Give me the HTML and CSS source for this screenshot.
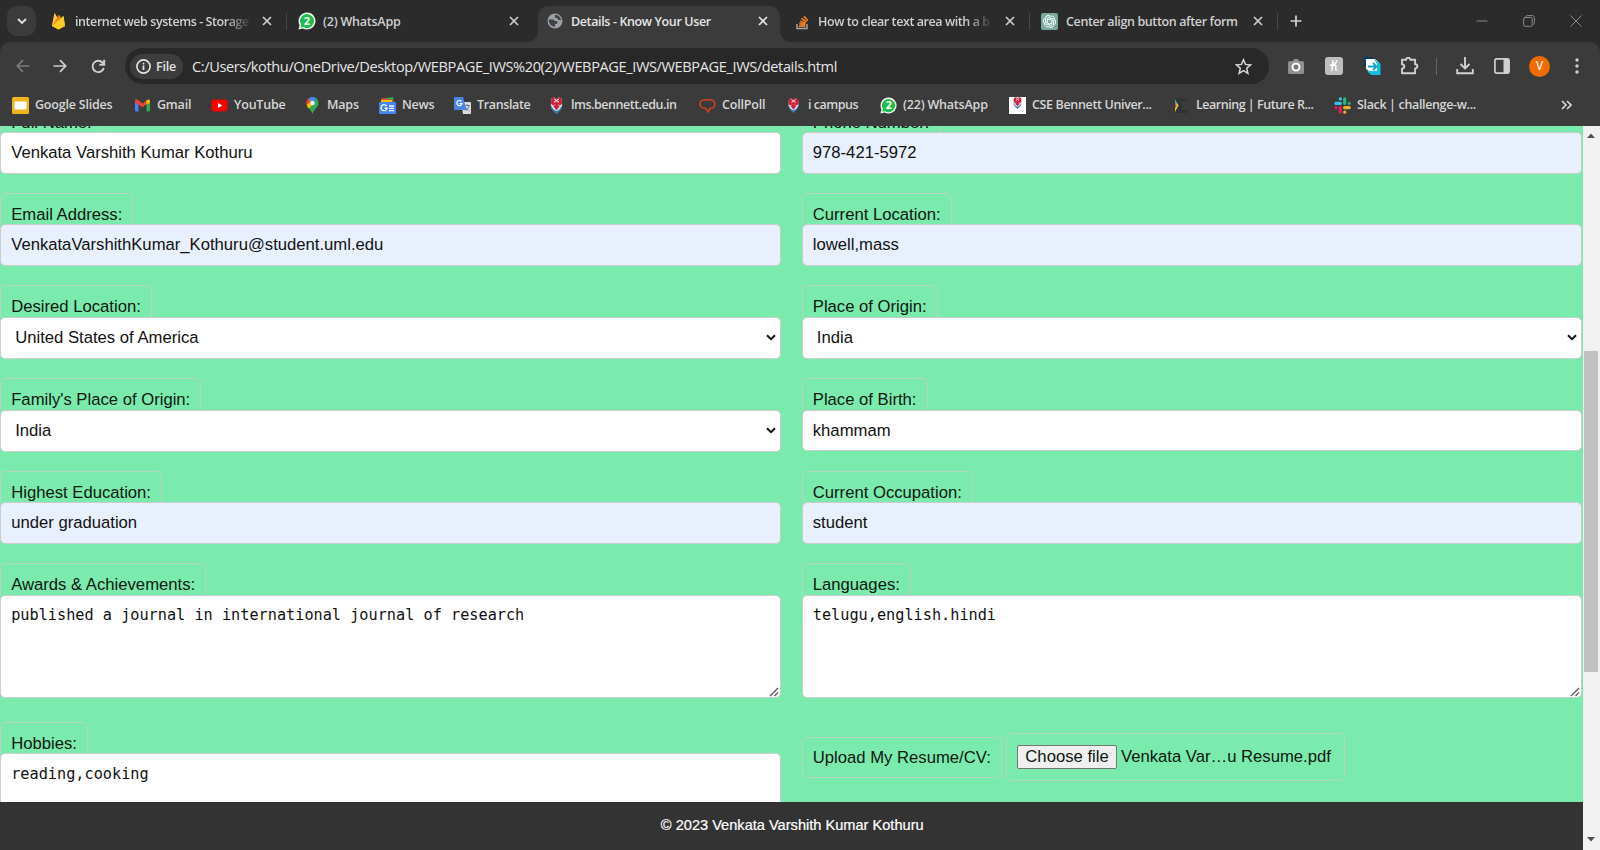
FILE: index.html
```html
<!DOCTYPE html>
<html lang="en">
<head>
<meta charset="utf-8">
<title>Details - Know Your User</title>
<link rel="stylesheet" href="styles.css">
</head>
<body>
<svg class="defs" width="0" height="0">
  <symbol id="x" viewBox="0 0 10 10"><path d="M1 1l8 8M9 1l-8 8" stroke="currentColor" stroke-width="1.7" fill="none"/></symbol>
  <symbol id="wa" viewBox="0 0 18 18"><path d="M9 .5a8.500 8.500 0 1 1-4 16L.4 17.600l1.200-4.400A8.500 8.500 0 0 1 9 .5z" fill="#f2fff5"/><path d="M9 2a7 7 0 1 1-3.600 13L2.400 15.700l.8-3A7 7 0 0 1 9 2z" fill="#1fbd4b"/></symbol>
  <symbol id="shield" viewBox="0 0 14 18"><path d="M1.500 1.500L4.500.5 7 1.500 9.500.5l3 1 .5 7c0 4-3 7-6 9-3-2-6-5-6-9z" fill="#d5dfec"/><path d="M1.500 1.500L4.500.5 7 1.500 9.500.5l3 1 .3 6L10.500 9 7 7 3.500 9 1.200 7.500z" fill="#cf1f38"/><path d="M1 9l3 4.500L7 15l3-1.500L13 9c0 4-3 6.500-6 8.500C4 15.500 1 13 1 9z" fill="#2b6ca8"/><path d="M7 6l3.200 4L7 14l-3.200-4z" fill="#d3203a"/><path d="M4.500 2l5 3.500M9.500 2l-5 3.500" stroke="#f7dfe3" stroke-width="1.200" fill="none"/></symbol>
  <symbol id="grip" viewBox="0 0 10 10"><path d="M1 9l8-8M5.500 9L9 5.500" stroke="#555" stroke-width="1.200" fill="none"/></symbol>
  <symbol id="down" viewBox="0 0 10 7"><path d="M1 1.200l4 3.900 4-3.900" stroke="#111" stroke-width="2" fill="none"/></symbol>
</svg>

<header class="browser">
  <div class="tabs">
    <div class="tab-search"><svg width="10" height="7" viewBox="0 0 10 7"><path d="M1 1l4 4 4-4" stroke="#dedede" stroke-width="1.900" fill="none"/></svg></div>
    <div class="tab tab-1">
      <svg width="17" height="18" viewBox="0 0 17 18"><path d="M2 14L4.500 1l3 4.500L9 3l2 3 2.500-2L15 14l-6.500 3.600z" fill="#ffa611"/><path d="M2 14L4.500 1l3.500 6z" fill="#ffc24a"/><path d="M2 14L9 3l2 4z" fill="#f4820b"/><path d="M2 14l11.500-10L15 14l-6.500 3.600z" fill="#ffca28"/></svg>
      <span class="tab-title fade">internet web systems - Storage</span>
      <svg class="close" width="10" height="10"><use href="#x"/></svg>
    </div>
    <div class="tab tab-2">
      <svg width="18" height="18"><use href="#wa"/><text class="wa-count" x="9" y="13">2</text></svg>
      <span class="tab-title">(2) WhatsApp</span>
      <svg class="close" width="10" height="10"><use href="#x"/></svg>
    </div>
    <div class="tab tab-3 active">
      <svg width="16" height="16" viewBox="0 0 16 16"><circle cx="8" cy="8" r="7.500" fill="#9aa0a6"/><path d="M1.800 6.500h4c1.200 0 1.700.8 1.700 1.500H9c1 0 1.500.8 1.500 1.500S10 11 9 11H8v2.500c-3.500.5-6.500-3-6.200-7zM8 2v1.500C8 4.500 8.500 5 9.500 5h1c0 1.500 1 2 2 2h1.500C13.800 4 11 1.800 8 2z" fill="#3f4245"/></svg>
      <span class="tab-title">Details - Know Your User</span>
      <svg class="close" width="10" height="10"><use href="#x"/></svg>
    </div>
    <div class="tab tab-4">
      <svg width="14" height="17" viewBox="0 0 14 17"><path d="M1 11v4.500h10V11" stroke="#a9a9a9" stroke-width="1.400" fill="none"/><path d="M3 13.200h6.300M3.200 10.700l6.200.9M4 8.200l5.700 2M5.500 5.500l5 3.400M8 3.200l3.800 4.500" stroke="#f48024" stroke-width="1.700"/></svg>
      <span class="tab-title fade">How to clear text area with a b</span>
      <svg class="close" width="10" height="10"><use href="#x"/></svg>
    </div>
    <div class="tab tab-5">
      <svg width="17" height="17" viewBox="0 0 17 17"><rect width="17" height="17" rx="2" fill="#75a99c"/><g fill="none" stroke="#fff" stroke-width=".9"><path id="petal" d="M6.200 9.800V5.300l3.200-1.900a2.700 2.700 0 0 1 4 2.700"/><use href="#petal" transform="rotate(60 8.500 8.500)"/><use href="#petal" transform="rotate(120 8.500 8.500)"/><use href="#petal" transform="rotate(180 8.500 8.500)"/><use href="#petal" transform="rotate(240 8.500 8.500)"/><use href="#petal" transform="rotate(300 8.500 8.500)"/></g></svg>
      <span class="tab-title">Center align button after form</span>
      <svg class="close" width="10" height="10"><use href="#x"/></svg>
    </div>
    <svg class="plus" width="12" height="12" viewBox="0 0 12 12"><path d="M6 .5v11M.5 6h11" stroke="#d5d5d5" stroke-width="1.700"/></svg>
    <div class="window-buttons">
      <svg width="12" height="12" viewBox="0 0 12 12"><path d="M.5 6h11" stroke="#8b8b8b"/></svg>
      <svg width="12" height="12" viewBox="0 0 12 12" fill="none" stroke="#8b8b8b"><rect x=".7" y="2.500" width="8.500" height="8.800" rx="1.500"/><path d="M2.700 2.300C2.700 1 3.200.6 4.500.6H9c1.600 0 2.400.8 2.400 2.400v4.600c0 1.200-.4 1.800-1.800 1.900"/></svg>
      <svg width="12" height="12" viewBox="0 0 12 12"><path d="M.5.5l11 11M11.500.5l-11 11" stroke="#8b8b8b"/></svg>
    </div>
  </div>

  <div class="toolbar">
    <svg width="14" height="14" viewBox="0 0 14 14" fill="none" stroke="#7c7c7c" stroke-width="1.700"><path d="M13.500 7H1.500M7 1.200L1.300 7 7 12.800"/></svg>
    <svg class="fwd" width="14" height="14" viewBox="0 0 14 14" fill="none" stroke="#d0d0d0" stroke-width="1.700"><path d="M.5 7h12M7 1.200L12.700 7 7 12.800"/></svg>
    <svg class="reload" width="15" height="15" viewBox="0 0 15 15" fill="none" stroke="#d0d0d0" stroke-width="1.900"><path d="M12.800 9A5.700 5.700 0 1 1 11.500 3.500l1.500 1.700M13.200.8v5H8.300"/></svg>
    <div class="omnibox">
      <div class="chip"><svg width="15" height="15" viewBox="0 0 15 15"><circle cx="7.500" cy="7.500" r="6.600" fill="none" stroke="#e3e3e3" stroke-width="1.600"/><path d="M7.500 6.500V11M7.500 3.700v1.700" stroke="#e3e3e3" stroke-width="1.700"/></svg><span>File</span></div>
      <span class="url">C:/Users/kothu/OneDrive/Desktop/WEBPAGE_IWS%20(2)/WEBPAGE_IWS/WEBPAGE_IWS/details.html</span>
      <svg class="star" width="17" height="17" viewBox="0 0 17 17"><path d="M8.500 1.700l2 4.700 5.100.5-3.900 3.400 1.200 5-4.400-2.700-4.400 2.700 1.200-5L1.400 6.900l5.100-.5z" fill="none" stroke="#d5d5d5" stroke-width="1.500"/></svg>
    </div>
    <svg class="ext-camera" width="16" height="15" viewBox="0 0 16 15"><path d="M5 2l1-2h4l1 2h3.500A1.500 1.500 0 0 1 16 3.500v10a1.500 1.500 0 0 1-1.500 1.500h-13A1.500 1.500 0 0 1 0 13.500v-10A1.500 1.500 0 0 1 1.500 2z" fill="#8f8f8f"/><circle cx="8" cy="8" r="3.500" fill="#777" stroke="#fff" stroke-width="1.900"/></svg>
    <svg class="ext-honey" width="18" height="18" viewBox="0 0 18 18"><rect width="18" height="18" rx="3" fill="#bdbdbd"/><path d="M8 3.800L6.800 13.500M7.500 9c2.500-1.800 4-.8 3.300 1.200-.6 1.800-.2 2.900.9 2.900M5.300 8c2 .5 4.500-.6 5.900-2.600M11.500 3.800v.1" stroke="#fff" stroke-width="1.500" fill="none" stroke-linecap="round"/></svg>
    <svg class="ext-blue" width="17" height="18" viewBox="0 0 17 18"><path d="M0 0h9v9H0z" fill="#073a72"/><path d="M2 2h9l4.500 4v9.500H7L2 12z" fill="#fff"/><path d="M10 2l6.500 5v11H7l-4-4h10V7z" fill="#12bfe0"/><path d="M4 9.500h8M9 6l3.500 3.500L9 13" stroke="#12a9d0" stroke-width="1.900" fill="none"/></svg>
    <svg class="ext-puzzle" width="19" height="18" viewBox="0 0 19 18"><path d="M2 2.700h4.200c0-2.600 4-2.600 4 0h4.900v4.500c3 0 3 4.200 0 4.200v4.900H2v-4.700c3-.4 3-4 0-4.400z" fill="none" stroke="#d0d0d0" stroke-width="1.900" stroke-linejoin="round"/></svg>
    <span class="bar-divider"></span>
    <svg class="download" width="18" height="18" viewBox="0 0 18 18" fill="none" stroke="#d0d0d0" stroke-width="1.900"><path d="M9 0v11M4.500 7L9 11.500 13.500 7M1.200 12v4.300h15.600V12"/></svg>
    <svg class="panel" width="16" height="16" viewBox="0 0 16 16"><rect x=".9" y=".9" width="14.200" height="14.200" rx="1.500" fill="none" stroke="#d0d0d0" stroke-width="1.700"/><path d="M9.500 1h5.500v14H9.500z" fill="#d0d0d0"/></svg>
    <span class="avatar">V</span>
    <svg class="menu" width="4" height="16" viewBox="0 0 4 16" fill="#d0d0d0"><circle cx="2" cy="2" r="1.700"/><circle cx="2" cy="8" r="1.700"/><circle cx="2" cy="14" r="1.700"/></svg>
  </div>

  <nav class="bookmarks">
    <a><svg width="17" height="17" viewBox="0 0 17 17"><rect width="17" height="17" rx="1.500" fill="#f0b41c"/><rect x="2.500" y="4.500" width="12" height="8" fill="#fff"/></svg><span>Google Slides</span></a>
    <a><svg width="17" height="17" viewBox="0 0 17 17"><path d="M1 3.500L4.500 6v8.500H2a1 1 0 0 1-1-1z" fill="#4285f4"/><path d="M16 3.500L12.500 6v8.500H15a1 1 0 0 0 1-1z" fill="#34a853"/><path d="M1 3.500C1 2 3 2 4 3l4.500 3.500L13 3v3.800l-4.500 3.500L1 5.500z" fill="#ea4335"/><path d="M12.500 3.300c1.500-1.300 3.500-.9 3.500.9v1.300l-3.500 2.300z" fill="#fbbc04"/></svg><span>Gmail</span></a>
    <a><svg width="17" height="17" viewBox="0 0 17 17"><rect x=".5" y="2.500" width="16" height="12" rx="3" fill="#f00"/><path d="M7 6v5l4.200-2.500z" fill="#fff"/></svg><span>YouTube</span></a>
    <a><svg width="17" height="17" viewBox="0 0 17 17"><path d="M8.500 0a6 6 0 0 1 6 6c0 4-4.500 6-6 11-1.500-5-6-7-6-11a6 6 0 0 1 6-6z" fill="#34a853"/><path d="M2.700 7.500L8 2 5 1.200A6 6 0 0 0 2.700 7.500z" fill="#ea4335"/><path d="M4.200 1.900A6 6 0 0 1 12.800 1.800L8 7z" fill="#4285f4"/><path d="M2.700 7.200l4-4.500L9 7.500l-4.200 4C3.500 10 2.900 8.700 2.700 7.200z" fill="#fbbc04"/><path d="M4.200 1.900L7 4.500 2.700 8C2.200 5.500 2.700 3.500 4.200 1.900z" fill="#ea4335"/><circle cx="8.500" cy="6" r="2.200" fill="#e9f2ff"/></svg><span>Maps</span></a>
    <a><svg width="17" height="17" viewBox="0 0 17 17"><path d="M2 2l12-2 1 6H2z" fill="#34a853"/><path d="M3 1l11 2v4H2z" fill="#ea4335"/><path d="M2 3h11v3H2z" fill="#fbbc04"/><rect y="5" width="17" height="12" rx="1" fill="#4285f4"/><path d="M7.500 9A3 3 0 1 0 8 11.200H5.500M10 9h5M10 11.300h5M10 13.600h5" stroke="#fff" stroke-width="1.300" fill="none"/></svg><span>News</span></a>
    <a><svg width="17" height="17" viewBox="0 0 17 17"><path d="M7 5h9a1 1 0 0 1 1 1v10a1 1 0 0 1-1 1H9z" fill="#dadce0"/><path d="M1 0h8l3.500 13H1a1 1 0 0 1-1-1V1a1 1 0 0 1 1-1z" fill="#4c84ec"/><path d="M7.500 4.500A2.600 2.600 0 1 0 8 6.600H5.500" stroke="#fff" stroke-width="1.200" fill="none"/><path d="M10.500 8.500H16M13.200 7v1.500M15 8.700c-.6 2.500-2 4-3.500 5M11.500 10c1 2 2.500 3 4 4" stroke="#6b7b8c" fill="none"/></svg><span class="snug">Translate</span></a>
    <a><svg width="17" height="17"><use href="#shield"/></svg><span class="tight">lms.bennett.edu.in</span></a>
    <a><svg width="17" height="17" viewBox="0 0 17 17"><path d="M11 11.500c7-.5 6.500-8.700-1-8.700H6.500C-1 3-1 11.300 6.500 11.300L9.500 15z" fill="none" stroke="#d4431f" stroke-width="1.500"/></svg><span>CollPoll</span></a>
    <a class="wide"><svg width="15" height="15"><use href="#shield"/></svg><span class="tight">i campus</span></a>
    <a><svg width="17" height="17" viewBox="0 0 18 18"><use href="#wa" width="18" height="18"/><text class="wa-count" x="9" y="13">2</text></svg><span>(22) WhatsApp</span></a>
    <a><svg width="17" height="17" viewBox="0 0 17 17"><path d="M0 0h17v17H0z" fill="#fff"/><use href="#shield" x="3" y="0" width="11" height="12"/></svg><span class="snug">CSE Bennett Univer...</span></a>
    <a><svg width="17" height="17" viewBox="0 0 17 17"><path d="M2 1h13v3H9v9h6v3H2z" fill="#303333"/><path d="M2 2l3.500 6.500H2z" fill="#2bb6c9"/><path d="M2 5l3.500 3.500L2 15z" fill="#f0c02a"/><path d="M2 5l2 3.500-2 3z" fill="#df3a60"/><path d="M3.500 6l2 2.500-2 3z" fill="#aede3c"/></svg><span class="tight">Learning | Future R...</span></a>
    <a><svg width="17" height="17" viewBox="0 0 17 17" stroke-width="3.200" stroke-linecap="round"><path d="M6.300 1.800h.1M1.900 6.300h4.500" stroke="#36c5f0"/><path d="M15.100 6.300h.1M10.700 1.900v4.400" stroke="#2eb67d"/><path d="M10.700 15.200h.1M10.700 10.700h4.500" stroke="#ecb22e"/><path d="M1.900 10.700H2M6.300 10.700v4.500" stroke="#e01e5a"/></svg><span class="snug">Slack | challenge-w...</span></a>
    <svg class="more" width="11" height="10" viewBox="0 0 11 10"><path d="M1 1l4 4-4 4M6 1l4 4-4 4" fill="none" stroke="#dadada" stroke-width="1.600"/></svg>
  </nav>
</header>

<div class="viewport">
  <div class="page">
    <form class="form">
      <div class="row">
        <div class="field"><label>Full Name:</label><div class="control">Venkata Varshith Kumar Kothuru</div></div>
        <div class="field"><label>Phone Number:</label><div class="control auto">978-421-5972</div></div>
      </div>
      <div class="row">
        <div class="field"><label>Email Address:</label><div class="control auto">VenkataVarshithKumar_Kothuru@student.uml.edu</div></div>
        <div class="field"><label>Current Location:</label><div class="control auto">lowell,mass</div></div>
      </div>
      <div class="row selects">
        <div class="field"><label>Desired Location:</label><div class="control select">United States of America<svg width="10" height="7"><use href="#down"/></svg></div></div>
        <div class="field"><label>Place of Origin:</label><div class="control select">India<svg width="10" height="7"><use href="#down"/></svg></div></div>
      </div>
      <div class="row">
        <div class="field"><label>Family's Place of Origin:</label><div class="control select">India<svg width="10" height="7"><use href="#down"/></svg></div></div>
        <div class="field"><label>Place of Birth:</label><div class="control">khammam</div></div>
      </div>
      <div class="row">
        <div class="field"><label>Highest Education:</label><div class="control auto">under graduation</div></div>
        <div class="field"><label>Current Occupation:</label><div class="control auto">student</div></div>
      </div>
      <div class="row tall">
        <div class="field"><label>Awards &amp; Achievements:</label><div class="control area">published a journal in international journal of research<svg width="10" height="10"><use href="#grip"/></svg></div></div>
        <div class="field"><label>Languages:</label><div class="control area">telugu,english.hindi<svg width="10" height="10"><use href="#grip"/></svg></div></div>
      </div>
      <div class="row last">
        <div class="field"><label>Hobbies:</label><div class="control area">reading,cooking</div></div>
        <div class="upload">
          <label>Upload My Resume/CV:</label>
          <div class="file"><span class="choose">Choose file</span><span>Venkata Var…u Resume.pdf</span></div>
        </div>
      </div>
    </form>
    <footer class="footer">© 2023 Venkata Varshith Kumar Kothuru</footer>
  </div>
  <div class="scrollbar">
    <svg width="8" height="5" viewBox="0 0 8 5"><path d="M0 5l4-4.500L8 5z" fill="#505050"/></svg>
    <div class="thumb"></div>
    <svg width="8" height="5" viewBox="0 0 8 5"><path d="M0 0l4 4.500L8 0z" fill="#505050"/></svg>
  </div>
</div>
</body>
</html>
```
FILE: styles.css
```css
* { box-sizing: border-box; }
body {
  margin: 0;
  width: 1600px;
  height: 850px;
  overflow: hidden;
  display: flex;
  flex-direction: column;
  background: #7aebac;
  font-family: "Liberation Sans", Arial, sans-serif;
}
svg { display: block; flex: none; }
.defs { position: absolute; }
.wa-count { font: 700 11px "Open Sans", sans-serif; fill: #fff; text-anchor: middle; }

/* Browser chrome */
.browser {
  height: 126px;
  flex: none;
  background: #2b2b2b;
  color: #d6d6d6;
  font-family: "Open Sans", "Noto Sans", sans-serif;
}
.tabs { display: flex; height: 42px; align-items: center; padding-left: 7px; }
.tab-search {
  width: 29px;
  height: 30px;
  border-radius: 10px;
  background: #3b3b3b;
  display: flex;
  align-items: center;
  justify-content: center;
}
.tab { display: flex; align-items: center; height: 36px; position: relative; color: #d0d0d0; }
.tab-title { font-size: 12.500px; font-weight: 600; white-space: nowrap; line-height: 20px; letter-spacing: -0.370px; padding-top: 1px; }
.close { margin-left: auto; }
.fade { -webkit-mask-image: linear-gradient(to right, #000 86%, transparent 102%); mask-image: linear-gradient(to right, #000 86%, transparent 102%); }
.tab-1 { width: 237px; margin-left: 14px; padding-right: 15px; gap: 8px; }
.tab-1 .tab-title { letter-spacing: -0.420px; }
.tab-2 { width: 239px; margin-left: 11px; padding-right: 18px; gap: 7px; }
.tab-2 .tab-title { letter-spacing: -0.220px; }
.tab-1::after, .tab-4::after, .tab-5::after { content: ""; position: absolute; right: 0; top: 10px; width: 1px; height: 17px; background: #474747; }
.tab-3 { width: 242px; margin: 6px 0 0 1px; padding: 0 12px 6px 9px; gap: 8px; background: #3b3b3b; border-radius: 10px 10px 0 0; color: #e6e6e6; }
.tab-3::before, .tab-3::after { content: ""; position: absolute; bottom: 0; width: 10px; height: 10px; }
.tab-3::before { left: -10px; background: radial-gradient(circle at 0 0, transparent 9.500px, #3b3b3b 10px); }
.tab-3::after { right: -10px; background: radial-gradient(circle at 100% 0, transparent 9.500px, #3b3b3b 10px); }
.tab-4 { width: 250px; padding: 0 15px 0 16px; gap: 8px; }
.tab-4 .tab-title { letter-spacing: -0.420px; }
.tab-5 { width: 248px; padding: 0 15px 0 11px; gap: 8px; }
.plus { margin-left: 12px; }
.window-buttons { display: flex; gap: 35px; margin-left: auto; padding-right: 18px; }

.toolbar {
  height: 48px;
  display: flex;
  align-items: center;
  padding: 0 0 0 16px;
  background: #3b3b3b;
  border-radius: 10px 10px 0 0;
}
.fwd { margin-left: 23px; }
.reload { margin-left: 24px; }
.omnibox { display: flex; align-items: center; width: 1144px; height: 36px; margin-left: 19px; padding: 0 17px 0 5px; border-radius: 18px; background: #282828; }
.chip { display: flex; align-items: center; gap: 5px; width: 53px; height: 25px; padding-left: 6px; border-radius: 13px; background: #3d3d3d; font-size: 12.500px; font-weight: 600; letter-spacing: -0.200px; color: #e3e3e3; }
.url { margin-left: 9px; font-size: 14.600px; color: #e6e6e6; white-space: nowrap; letter-spacing: -0.400px; }
.star { margin-left: auto; }
.ext-camera { margin-left: 19px; }
.ext-honey { margin-left: 21px; }
.ext-blue { margin-left: 21px; }
.ext-puzzle { margin-left: 19px; }
.bar-divider { width: 1px; height: 17px; margin-left: 17px; background: #666; }
.download { margin-left: 19px; }
.panel { margin-left: 20px; }
.avatar { width: 21px; height: 21px; margin-left: 19px; border-radius: 50%; background: #ef6c00; color: #fff; font: 12px/21px Roboto, sans-serif; text-align: center; }
.menu { margin-left: 25px; }

.bookmarks {
  display: grid;
  grid-template-columns: 122px 77px 93px 75px 75px 94px 151px 87px 94px 129px 164px 161px 227px 11px;
  align-items: center;
  height: 36px;
  padding: 0 0 6px 12px;
  background: #3b3b3b;
}
.bookmarks a { display: flex; align-items: center; gap: 6px; font-size: 12.500px; font-weight: 600; line-height: 20px; letter-spacing: -0.200px; white-space: nowrap; }
.bookmarks .wide { gap: 7px; }
.bookmarks .snug { letter-spacing: -0.350px; }
.bookmarks .tight { letter-spacing: -0.480px; }

/* Page */
.viewport { flex: 1; min-height: 0; display: flex; overflow: hidden; }
.page { width: 1582.500px; display: flex; flex-direction: column; overflow: hidden; color: #0c1710; font-size: 16.670px; }
.form { flex: 1; min-height: 0; overflow: hidden; }
.row { display: grid; grid-template-columns: 780.600px 780.600px; column-gap: 21px; height: 92.500px; }
.row:first-child { margin-top: -25.500px; height: 92.300px; }
.selects { height: 92.900px; }
.tall { height: 158.600px; }
.field { display: flex; flex-direction: column; align-items: flex-start; }
.field label { height: 31.500px; padding: 11px 10.200px 0; border: 1px solid #b5d6c1; border-bottom: 0; border-radius: 5px 5px 0 0; line-height: 19px; white-space: nowrap; }
.control { position: relative; width: 100%; height: 41.500px; padding: 0 10.200px; border: 1px solid #ccc; border-radius: 5px; background: #fff; color: #111; line-height: 39px; white-space: nowrap; }
.auto { background: #e8f0fe; }
.select { height: 42px; padding: 0 4px 0 14.200px; line-height: 40px; display: flex; align-items: center; justify-content: space-between; }
.area { height: 103.500px; padding-top: 10.500px; font: 15.220px/19px "DejaVu Sans Mono", monospace; }
.area svg { position: absolute; right: 1px; bottom: 0; }
.upload { display: flex; align-items: center; gap: 4px; height: 48px; margin-top: 11.500px; }
.upload label { height: 41px; padding: 0 10.200px; border: 1px solid #b5d6c1; border-radius: 5px; line-height: 40px; white-space: nowrap; }
.file { display: flex; align-items: center; gap: 4px; width: 339px; height: 48px; padding-left: 10px; border: 1px solid #b5d6c1; border-radius: 5px; white-space: nowrap; }
.choose { width: 100px; height: 24px; border: 1px solid #767676; border-radius: 2px; background: #efefef; text-align: center; line-height: 22px; }
.footer { height: 48px; flex: none; background: #333; color: #fff; font-size: 14.600px; line-height: 46px; text-align: center; padding-left: 2px; -webkit-text-stroke: 0.2px #fff; }
.scrollbar { width: 17.500px; display: flex; flex-direction: column; align-items: center; padding: 7px 0 8px; background: #f1f1f1; }
.thumb { width: 14px; height: 321px; margin: 213px 0 auto; background: #c1c1c1; }
```
